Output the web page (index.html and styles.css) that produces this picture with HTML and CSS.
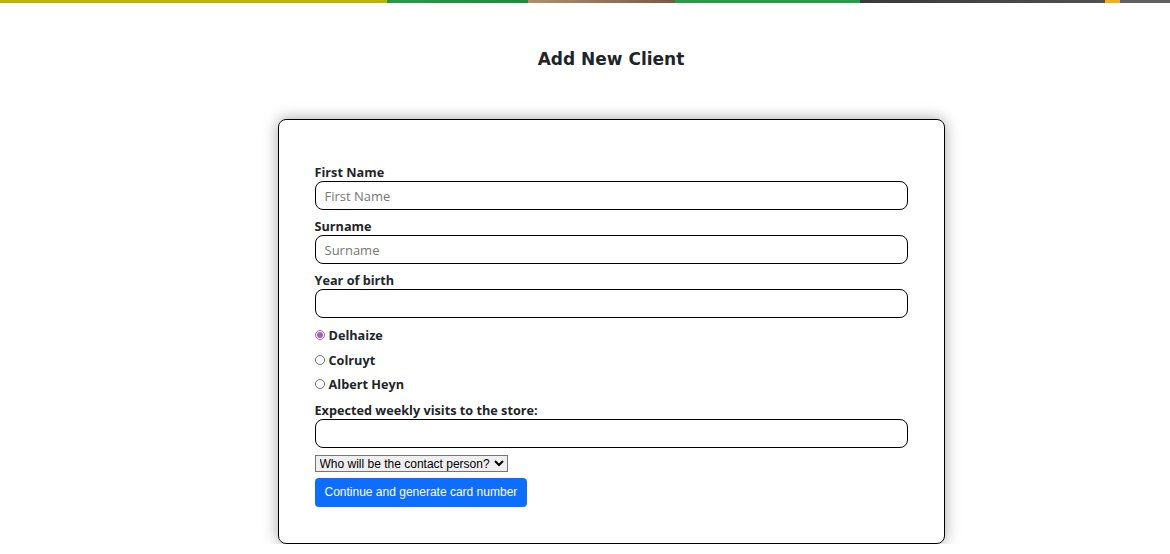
FILE: index.html
```html
<!DOCTYPE html>
<html lang="en">
<head>
    <meta charset="UTF-8">
    <meta name="viewport" content="width=device-width, initial-scale=1.0">
    <title>Add New Client</title>
    <link rel="stylesheet" href="styles.css">
</head>
<body>

<div class="top-strip"></div>

<main class="page">
    <h1 class="title">Add New Client</h1>

    <form class="client-card">
        <div class="field">
            <label for="firstName">First Name</label>
            <input type="text" id="firstName" placeholder="First Name">
        </div>

        <div class="field">
            <label for="surname">Surname</label>
            <input type="text" id="surname" placeholder="Surname">
        </div>

        <div class="field">
            <label for="birthYear">Year of birth</label>
            <input type="text" id="birthYear">
        </div>

        <div class="radio-group">
            <div class="radio-row">
                <input type="radio" id="delhaize" name="store" checked>
                <label for="delhaize">Delhaize</label>
            </div>
            <div class="radio-row">
                <input type="radio" id="colruyt" name="store">
                <label for="colruyt">Colruyt</label>
            </div>
            <div class="radio-row">
                <input type="radio" id="albert" name="store">
                <label for="albert">Albert Heyn</label>
            </div>
        </div>

        <div class="field field-last">
            <label for="visits">Expected weekly visits to the store:</label>
            <input type="text" id="visits">
        </div>

        <select class="contact-select">
            <option>Who will be the contact person?</option>
        </select>

        <button type="button" class="submit-btn">Continue and generate card number</button>
    </form>
</main>

</body>
</html>
```

FILE: styles.css
```css
* {
    margin: 0;
    padding: 0;
    box-sizing: border-box;
}
body {
    font-family: "DejaVu Sans", Arial, sans-serif;
    background-color: #fff;
    color: #212529;
}
.top-strip {
    height: 3px;
    background: linear-gradient(to right,
        #b8b400 0, #b8b400 387px,
        #2a9a48 387px, #1f8a3a 528px,
        #b09070 528px, #7a5a40 675px,
        #2a9a48 675px, #2a9a48 860px,
        #3a3a3a 860px, #505050 1105px,
        #f0b020 1105px, #f0b020 1120px,
        #606060 1120px);
}
.page {
    padding-left: 52px;
    display: flex;
    flex-direction: column;
    align-items: center;
}
.title {
    font-size: 17px;
    font-weight: bold;
    margin-top: 46px;
    color: #212529;
}
.client-card {
    width: 667px;
    margin-top: 50px;
    border: 1px solid #000;
    border-radius: 8px;
    box-shadow: 0 0 15px rgba(0, 0, 0, 0.35);
    padding: 44px 36px 36px 36px;
    display: flex;
    flex-direction: column;
    align-items: flex-start;
}
.field {
    width: 100%;
    margin-bottom: 8px;
}
.field-last {
    margin-bottom: 7px;
}
.field label {
    display: block;
    font-family: "Open Sans", sans-serif;
    font-size: 12.7px;
    font-weight: bold;
    line-height: 17px;
}
.field input {
    width: 100%;
    height: 29px;
    border: 1px solid #000;
    border-radius: 8px;
    padding: 0 9px;
    font-family: "Open Sans", sans-serif;
    font-size: 13px;
}
.field input::placeholder {
    color: #777;
}
.radio-group {
    margin-top: -3px;
    margin-bottom: 5px;
}
.radio-row {
    display: flex;
    align-items: center;
    height: 24.5px;
}
.radio-row input {
    width: 10px;
    height: 10px;
    margin-right: 4px;
    accent-color: #a55fc4;
}
.radio-row label {
    font-family: "Open Sans", sans-serif;
    font-size: 12.7px;
    font-weight: bold;
}
.contact-select {
    font-family: "Liberation Sans", Arial, sans-serif;
    font-size: 12px;
    color: #000;
    border: 1px solid #767676;
    height: 17px;
}
.submit-btn {
    margin-top: 6px;
    background-color: #0d6efd;
    color: #fff;
    border: none;
    border-radius: 4px;
    height: 29px;
    padding: 0 10px;
    font-family: "Liberation Sans", Arial, sans-serif;
    font-size: 12px;
    cursor: pointer;
}
```
